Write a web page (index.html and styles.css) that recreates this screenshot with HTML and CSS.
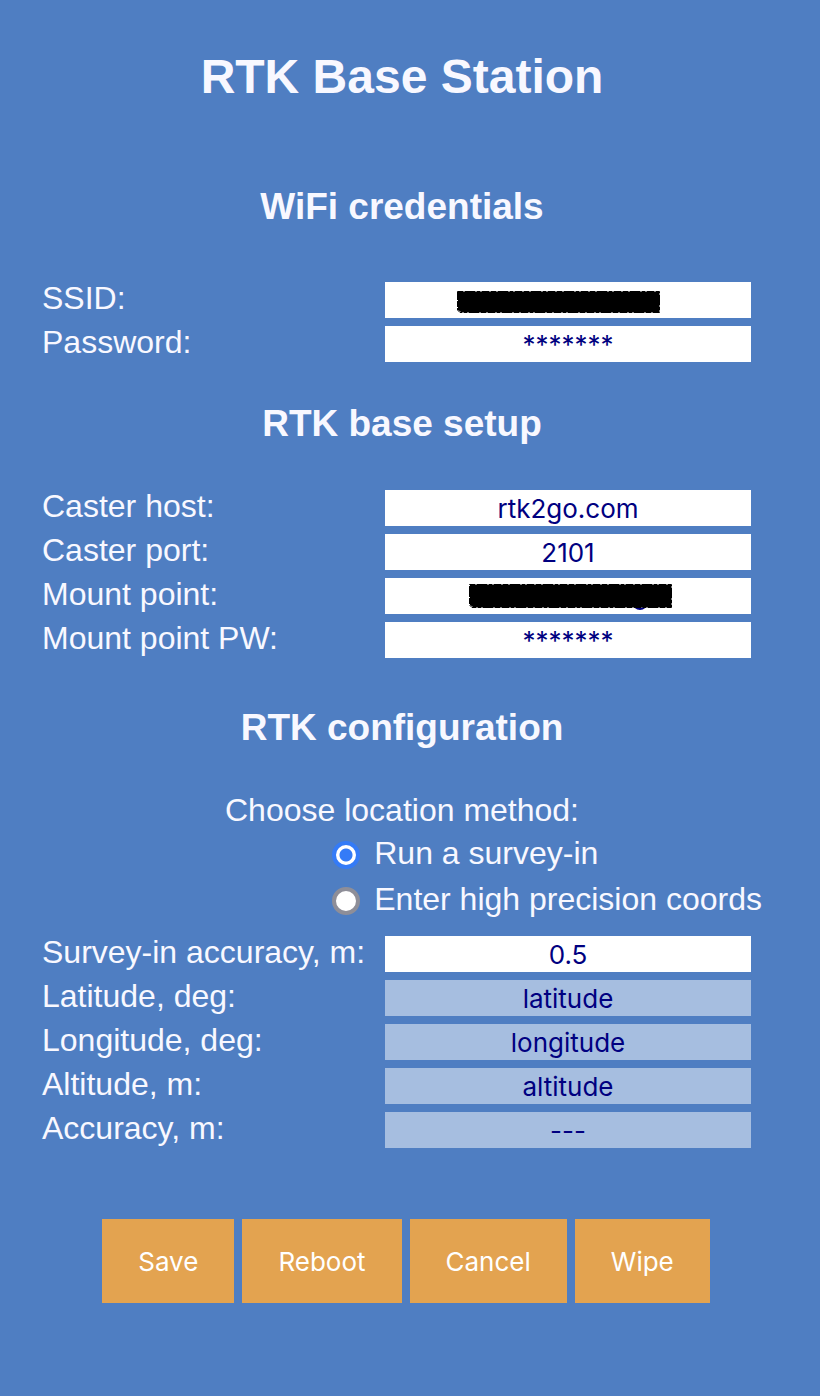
FILE: index.html
```html
<!DOCTYPE html>
<html lang="en">
<head>
<meta charset="utf-8">
<meta name="viewport" content="width=device-width, initial-scale=1">
<title>RTK Base Station</title>
<link rel="stylesheet" href="styles.css">
</head>
<body>
<main class="page">
  <h1 class="title">RTK Base Station</h1>
  <form class="form">
    <h2 class="heading heading-first">WiFi credentials</h2>
    <div class="fields">
      <label class="label" for="ssid">SSID:</label>
      <div class="control">
        <input class="input" id="ssid" type="text">
        <svg class="redaction redaction-ssid" viewBox="0 0 205 24" aria-hidden="true"><path d="M2 2H203V22H5L2 20Z"/><path class="rough" d="M1.5 1.5H203.5V22.5H4L1.5 20Z"/></svg>
      </div>
      <label class="label" for="password">Password:</label>
      <input class="input" id="password" type="text" value="*******">
    </div>

    <h2 class="heading">RTK base setup</h2>
    <div class="fields">
      <label class="label" for="host">Caster host:</label>
      <input class="input" id="host" type="text" value="rtk2go.com">
      <label class="label" for="port">Caster port:</label>
      <input class="input" id="port" type="text" value="2101">
      <label class="label" for="mount">Mount point:</label>
      <div class="control">
        <input class="input" id="mount" type="text">
        <svg class="redaction redaction-mount" viewBox="0 0 205 28" aria-hidden="true"><path class="tail" d="M167 24q5 4 10 0"/><path d="M2 2H203V24H5L2 22Z"/><path class="rough" d="M1.5 1.5H203.5V24.5H4L1.5 22Z"/></svg>
      </div>
      <label class="label" for="mount-password">Mount point PW:</label>
      <input class="input" id="mount-password" type="text" value="*******">
    </div>

    <h2 class="heading heading-config">RTK configuration</h2>
    <fieldset class="methods">
      <legend class="legend">Choose location method:</legend>
      <div class="options">
        <label class="option"><input class="radio" type="radio" name="method" checked>Run a survey-in</label>
        <label class="option"><input class="radio" type="radio" name="method">Enter high precision coords</label>
      </div>
    </fieldset>
    <div class="fields">
      <label class="label" for="survey">Survey-in accuracy, m:</label>
      <input class="input" id="survey" type="text" value="0.5">
      <label class="label" for="latitude">Latitude, deg:</label>
      <input class="input" id="latitude" type="text" value="latitude" disabled>
      <label class="label" for="longitude">Longitude, deg:</label>
      <input class="input" id="longitude" type="text" value="longitude" disabled>
      <label class="label" for="altitude">Altitude, m:</label>
      <input class="input" id="altitude" type="text" value="altitude" disabled>
      <label class="label" for="accuracy">Accuracy, m:</label>
      <input class="input" id="accuracy" type="text" value="---" disabled>
    </div>
    <div class="actions">
      <button class="button" type="button">Save</button>
      <button class="button" type="button">Reboot</button>
      <button class="button" type="button">Cancel</button>
      <button class="button" type="button">Wipe</button>
    </div>
  </form>
</main>
</body>
</html>
```
FILE: styles.css
```css
* {
  box-sizing: border-box;
}

body {
  margin: 0;
  background: #4f7ec2;
  color: #f8f8ff;
  font: 32px/32px "Liberation Sans", Arial, sans-serif;
}

.page {
  padding: 49px 58px 92px 42px;
}

.title {
  margin: 0;
  font-size: 48px;
  line-height: 56px;
  text-align: center;
}

.heading {
  margin: 38px 0 42px;
  font-size: 37px;
  line-height: 48px;
  text-align: center;
}

.heading-first {
  margin: 78px 0 51px;
}

.heading-config {
  margin-top: 46px;
}

.fields {
  display: grid;
  grid-template-columns: 343px minmax(0, 1fr);
  grid-auto-rows: 36px;
  row-gap: 8px;
  padding-right: 11px;
}

.label {
  white-space: nowrap;
}

.control {
  position: relative;
}

.input {
  display: block;
  width: 100%;
  height: 36px;
  margin: 0;
  padding: 0;
  border: 0;
  border-radius: 0;
  background: #fff;
  color: #000080;
  font: 26px/32px Inter, sans-serif;
  text-align: center;
}

.input:disabled {
  background: #a6bee0;
}

.redaction {
  position: absolute;
  top: 8px;
  left: 71px;
  width: 205px;
}

.redaction-mount {
  top: 5px;
  left: 83px;
}

.rough {
  fill: none;
  stroke: #000;
  stroke-width: 1;
  stroke-dasharray: 6 1 11 1 4 1 8 1;
}

.tail {
  fill: none;
  stroke: #000080;
  stroke-width: 2;
}

.methods {
  margin: 0 0 21px;
  padding: 0;
  border: 0;
}

.legend {
  width: 100%;
  padding: 0;
  text-align: center;
}

.options {
  display: grid;
  row-gap: 14px;
  width: fit-content;
  margin: 11px 0 0 auto;
}

.option {
  display: flex;
  align-items: center;
  gap: 14px;
}

.radio {
  appearance: none;
  width: 28px;
  height: 28px;
  margin: 4px 0 0;
  border: 4px solid #8e8e98;
  border-radius: 50%;
  background: #fff;
}

.radio:checked {
  border-color: #347bf7;
  background: radial-gradient(circle, #347bf7 6px, #fff 7px);
}

.actions {
  display: flex;
  justify-content: center;
  gap: 8px;
  margin-top: 71px;
  padding-left: 8px;
}

.button {
  height: 84px;
  padding: 2px 36px 0;
  border: 0;
  background: #e3a350;
  color: #fff;
  font: 26px/32px Inter, sans-serif;
}
```
